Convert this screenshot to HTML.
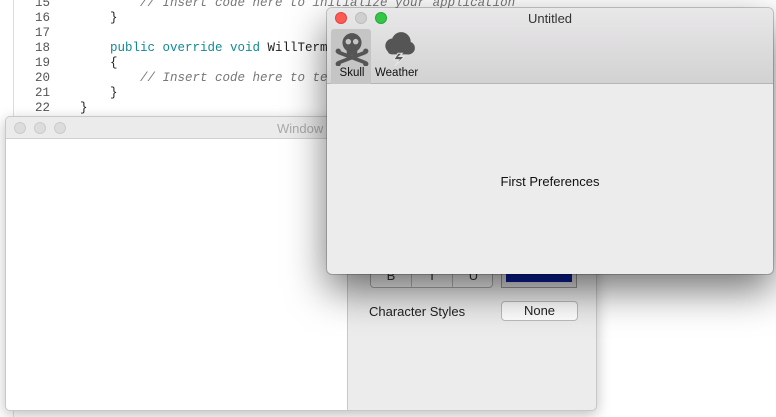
<!DOCTYPE html>
<html><head><meta charset="utf-8"><style>
*{margin:0;padding:0;box-sizing:border-box}
body{width:776px;height:417px;overflow:hidden;background:#fff;position:relative;font-family:"Liberation Sans",sans-serif}
.gut{position:absolute;left:13px;top:0;width:1px;height:417px;background:#ddd}
.code{position:absolute;left:3px;top:-4px;font-family:"Liberation Mono",monospace;font-size:12.5px;line-height:15px;white-space:pre;color:#222}
.ln{color:#555;display:inline-block;width:47px;text-align:right;padding-right:0}
.cm{color:#777;font-style:italic}.kw{color:#0f8a96}
.tl{position:absolute;width:12px;height:12px;border-radius:50%}
#w1{position:absolute;left:5px;top:116px;width:592px;height:295px;border:1px solid #c8c8c8;border-radius:5px;background:#ececec;box-shadow:0 4px 14px rgba(0,0,0,.25);overflow:hidden}
#w1 .tb{height:22px;background:#ebebeb;border-bottom:1px solid #d0d0d0}
#w2{position:absolute;left:327px;top:8px;width:446px;height:266px;border-radius:5px;background:#ececec;box-shadow:0 16px 40px rgba(0,0,0,.55),0 0 0 1px rgba(0,0,0,.2);overflow:hidden}
#w2 .tb{height:76px;background:linear-gradient(#e9e8e9,#d3d2d3);border-bottom:1px solid #b5b5b5}
.seg{position:absolute;top:0;width:41px;height:19px;text-align:center;font-size:13px;line-height:14px;color:#333;border-right:1px solid #bbb}
</style></head><body>
<div class="gut"></div>
<div class="code"><span class="ln">15</span>            <span class="cm">// Insert code here to initialize your application</span>
<span class="ln">16</span>        }
<span class="ln">17</span>
<span class="ln">18</span>        <span class="kw">public override void</span> WillTerminate
<span class="ln">19</span>        {
<span class="ln">20</span>            <span class="cm">// Insert code here to tear</span>
<span class="ln">21</span>        }
<span class="ln">22</span>    }</div>

<div id="w1">
 <div class="tb">
  <div class="tl" style="left:8px;top:5px;background:#dcdcdc;border:1px solid #ccc"></div>
  <div class="tl" style="left:28px;top:5px;background:#dcdcdc;border:1px solid #ccc"></div>
  <div class="tl" style="left:48px;top:5px;background:#dcdcdc;border:1px solid #ccc"></div>
  <div style="position:absolute;left:271px;top:4px;font-size:13px;color:#aaa">Window</div>
 </div>
 <div style="position:absolute;left:0;top:22px;width:342px;height:273px;background:#fff;border-right:1px solid #c8c8c8"></div>
 <div style="position:absolute;left:364px;top:151px;width:123px;height:20px;border:1px solid #aaa;border-radius:4px;background:#f4f4f4;overflow:hidden">
  <div class="seg" style="left:0">B</div><div class="seg" style="left:41px">I</div><div class="seg" style="left:82px;border:0">U</div>
 </div>
 <div style="position:absolute;left:495px;top:150px;width:76px;height:21px;border:1px solid #999;background:#e0e0e0"><div style="margin:3px 4px;height:11px;background:#0c1e9a"></div></div>
 <div style="position:absolute;left:363px;top:187px;font-size:13px;color:#222">Character Styles</div>
 <div style="position:absolute;left:495px;top:184px;width:77px;height:20px;border:1px solid #bbb;border-radius:4px;background:#fff;font-size:13px;text-align:center;line-height:18px;color:#222">None</div>
</div>

<div id="w2">
 <div class="tb">
  <div class="tl" style="left:8px;top:4px;background:#fd5c55;border:1px solid #e0443e"></div>
  <div class="tl" style="left:28px;top:4px;background:#cfcfcf;border:1px solid #bdbdbd"></div>
  <div class="tl" style="left:48px;top:4px;background:#34c647;border:1px solid #23a83a"></div>
  <div style="position:absolute;left:0;width:100%;top:3px;text-align:center;font-size:13px;color:#333">Untitled</div>
  <div style="position:absolute;left:4px;top:21px;width:40px;height:55px;background:#c6c5c6;border-radius:3px 3px 0 0"></div>
  <svg style="position:absolute;left:7px;top:22px" width="36" height="36" viewBox="0 0 34 34" fill="#555">
   <ellipse cx="17" cy="12" rx="9" ry="9"/><rect x="12" y="17" width="10" height="7" rx="2"/>
   <circle cx="13.5" cy="11" r="2.6" fill="#c6c5c6"/><circle cx="20.5" cy="11" r="2.6" fill="#c6c5c6"/>
   <path d="M4 21 L30 31 M30 21 L4 31" stroke="#555" stroke-width="3.5"/>
   <circle cx="4" cy="20" r="2.5"/><circle cx="30" cy="20" r="2.5"/><circle cx="4" cy="32" r="2.5"/><circle cx="30" cy="32" r="2.5"/>
  </svg>
  <div style="position:absolute;left:5px;top:59px;width:40px;text-align:center;font-size:11.5px;color:#111">Skull</div>
  <svg style="position:absolute;left:52px;top:22px" width="38" height="36" viewBox="0 0 36 34" fill="#555">
   <circle cx="13" cy="15" r="7"/><circle cx="21" cy="11" r="9"/><circle cx="28" cy="17" r="6"/><rect x="8" y="15" width="24" height="8" rx="4"/>
   <path d="M18 22 L14 28 L19 28 L15 34 L24 25 L19 25 L22 22Z" fill="#555" stroke="#e4e4e4" stroke-width="1"/>
  </svg>
  <div style="position:absolute;left:48px;top:59px;font-size:11.5px;color:#111">Weather</div>
 </div>
 <div style="position:absolute;left:0;width:100%;top:166px;text-align:center;font-size:13px;color:#111">First Preferences</div>
</div>
</body></html>
